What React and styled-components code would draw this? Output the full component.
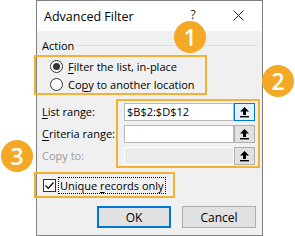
import React from "react";
import styled, { createGlobalStyle } from "styled-components";

const Global = createGlobalStyle`
  html, body { margin: 0; padding: 0; background: #fff; }
  body { font-family: "Open Sans", "Noto Sans", "Liberation Sans", sans-serif; }
`;

const ORANGE = "#f3a826";
const HILITE = "#f5b134";

const Page = styled.div`
  position: relative;
  width: 295px;
  height: 236px;
  overflow: hidden;
  background: #fff;
`;

const Dialog = styled.div`
  margin-left: 36px;
  width: 227px;
  height: 236px;
  box-sizing: border-box;
  border: 1px solid #808080;
  display: flex;
  flex-direction: column;
  font-size: 11px;
  color: #000;
  white-space: nowrap;
`;

const TitleBar = styled.div`
  height: 30px;
  background: #fff;
  display: flex;
  align-items: center;
  padding-left: 7px;
  padding-right: 18px;
  font-size: 12.5px;
  flex-shrink: 0;
`;

const Title = styled.span`
  flex: 1;
`;

const HelpBtn = styled.span`
  width: 20px;
  text-align: center;
  font-size: 12px;
  line-height: 12px;
  color: #222;
  margin-right: 30px;
  margin-bottom: 3px;
`;

const CloseBtn = styled.span`
  width: 11px;
  height: 11px;
  display: flex;
  margin-bottom: 1px;
`;

const Body = styled.div`
  flex: 1;
  background: #f0f0f0;
  display: flex;
  flex-direction: column;
`;

const GroupHeader = styled.div`
  height: 24px;
  display: flex;
  align-items: center;
  padding: 4px 5px 0 5px;
  box-sizing: border-box;
  gap: 4px;
`;

const GroupLine = styled.div`
  flex: 1;
  height: 1px;
  background: #dcdcdc;
`;

const Highlight = styled.div`
  box-sizing: border-box;
  border: 2px solid ${HILITE};
  margin-left: ${(p) => p.$ml || 0}px;
  width: ${(p) => p.$w}px;
  height: ${(p) => p.$h}px;
`;

const RadioBox = styled(Highlight)`
  display: flex;
  flex-direction: column;
  padding-left: 14px;
`;

const RadioRow = styled.div`
  height: 18px;
  display: flex;
  align-items: center;
  gap: 5px;
`;

const RadioCircle = styled.span`
  width: 11px;
  height: 11px;
  border-radius: 50%;
  border: 1px solid #333;
  background: #fff;
  display: flex;
  align-items: center;
  justify-content: center;
  flex-shrink: 0;
  &::after {
    content: "";
    width: 7px;
    height: 7px;
    border-radius: 50%;
    background: ${(p) => (p.$on ? "#333" : "transparent")};
  }
`;

const Ranges = styled.div`
  display: flex;
  margin-top: 4px;
`;

const LabelCol = styled.div`
  width: 79px;
  padding: 4px 0 0 5px;
  box-sizing: border-box;
  display: flex;
  flex-direction: column;
  gap: 4px;
`;

const Label = styled.div`
  height: 18px;
  line-height: 18px;
  color: ${(p) => (p.$disabled ? "#9a9a9a" : "#000")};
`;

const InputBox = styled(Highlight)`
  display: flex;
  flex-direction: column;
  gap: 4px;
  padding: 2px 3px 0 6px;
`;

const InputRow = styled.div`
  height: 18px;
  display: flex;
`;

const TextField = styled.div`
  flex: 1;
  box-sizing: border-box;
  border: 1px solid ${(p) => (p.$disabled ? "#fff" : "#b9b9b9")};
  background: ${(p) => (p.$disabled ? "#ececec" : "#fff")};
  padding-left: 2px;
  line-height: 16px;
`;

const RefButton = styled.div`
  width: 21px;
  box-sizing: border-box;
  border: 1px solid ${(p) => (p.$focus ? "#0078d7" : "#adadad")};
  background: ${(p) => (p.$focus ? "#e5f1fb" : "#e1e1e1")};
  display: flex;
  align-items: center;
  justify-content: center;
`;

const CheckBox = styled(Highlight)`
  margin-top: 4px;
  display: flex;
  align-items: center;
  padding-left: 7px;
  gap: 3px;
`;

const Check = styled.span`
  width: 13px;
  height: 13px;
  box-sizing: border-box;
  border: 1px solid #333;
  background: #fff;
  display: flex;
  align-items: center;
  justify-content: center;
`;

const FocusText = styled.span`
  outline: 1px dotted #000;
  padding: 0 1px;
  line-height: 15px;
`;

const Buttons = styled.div`
  display: flex;
  justify-content: flex-end;
  gap: 11px;
  margin-top: 8px;
  padding-right: 6px;
`;

const Button = styled.div`
  width: 74px;
  height: 22px;
  box-sizing: border-box;
  border: ${(p) => (p.$default ? "2px solid #0078d7" : "1px solid #adadad")};
  background: #e1e1e1;
  display: flex;
  align-items: center;
  justify-content: center;
  font-size: 12px;
`;

const Badge = styled.div`
  position: absolute;
  left: ${(p) => p.$x - 16}px;
  top: ${(p) => p.$y - 16}px;
  width: 32px;
  height: 32px;
  border-radius: 50%;
  background: ${ORANGE};
  color: #fff;
  font-family: "Open Sans", "Liberation Sans", sans-serif;
  font-size: 23px;
  font-weight: 600;
  display: flex;
  align-items: center;
  justify-content: center;
`;

const U = styled.u`
  text-underline-offset: 2px;
`;

const UpArrow = () => (
  <svg width="11" height="12" viewBox="0 0 11 12">
    <path d="M5.5 1 L10 5.5 L7 5.5 L7 9 L4 9 L4 5.5 L1 5.5 Z" fill="#000" />
    <rect x="1" y="10" width="9" height="1.4" fill="#000" />
  </svg>
);

export default function App() {
  return (
    <Page>
      <Global />
      <Dialog>
        <TitleBar>
          <Title>Advanced Filter</Title>
          <HelpBtn>?</HelpBtn>
          <CloseBtn>
            <svg width="11" height="11" viewBox="0 0 11 11">
              <path d="M0.5 0.5 L10.5 10.5 M10.5 0.5 L0.5 10.5" stroke="#222" strokeWidth="1" />
            </svg>
          </CloseBtn>
        </TitleBar>
        <Body>
          <GroupHeader>
            <span>Action</span>
            <GroupLine />
          </GroupHeader>
          <RadioBox $ml={-3} $w={173} $h={40}>
            <RadioRow>
              <RadioCircle $on />
              <span>
                <U>F</U>ilter the list, in-place
              </span>
            </RadioRow>
            <RadioRow>
              <RadioCircle />
              <span>
                Co<U>p</U>y to another location
              </span>
            </RadioRow>
          </RadioBox>
          <Ranges>
            <LabelCol>
              <Label>
                <U>L</U>ist range:
              </Label>
              <Label>
                <U>C</U>riteria range:
              </Label>
              <Label $disabled>Copy to:</Label>
            </LabelCol>
            <InputBox $w={144} $h={69}>
              <InputRow>
                <TextField>$B$2:$D$12</TextField>
                <RefButton $focus>
                  <UpArrow />
                </RefButton>
              </InputRow>
              <InputRow>
                <TextField />
                <RefButton>
                  <UpArrow />
                </RefButton>
              </InputRow>
              <InputRow>
                <TextField $disabled />
                <RefButton>
                  <UpArrow />
                </RefButton>
              </InputRow>
            </InputBox>
          </Ranges>
          <CheckBox $ml={-3} $w={141} $h={26}>
            <Check>
              <svg width="11" height="11" viewBox="0 0 11 11">
                <path d="M1.5 5.5 L4.2 8.3 L9.5 2.5" stroke="#000" strokeWidth="1.2" fill="none" />
              </svg>
            </Check>
            <FocusText>
              Unique <U>r</U>ecords only
            </FocusText>
          </CheckBox>
          <Buttons>
            <Button $default>OK</Button>
            <Button>Cancel</Button>
          </Buttons>
        </Body>
      </Dialog>
      <Badge $x={190} $y={37}>1</Badge>
      <Badge $x={278} $y={81}>2</Badge>
      <Badge $x={17} $y={156}>3</Badge>
    </Page>
  );
}
